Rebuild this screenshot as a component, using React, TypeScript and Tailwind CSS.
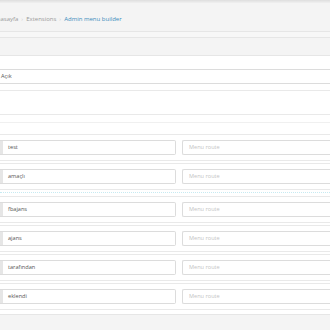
import React from 'react';

const items = ['test', 'amaçlı', 'fbajans', 'ajans', 'tarafından', 'eklendi'];

function MenuRow({ label }: { label: string }) {
  return (
    <div className="border-y border-[#e9e9e9] py-[5px] mb-[2px]">
      <div className="flex items-center gap-[6px]">
        <div className="flex h-[15px] w-[176px] items-center rounded-r-[2px] border border-l-0 border-[#dcdcdc] bg-white">
          <div className="h-full w-[3px] bg-[#e6e6e6]" />
          <span className="pl-[5px] text-[5.6px] text-[#555]">{label}</span>
        </div>
        <div className="flex h-[15px] flex-1 items-center rounded-l-[2px] border border-r-0 border-[#dcdcdc] bg-white pl-[6px]">
          <span className="text-[5.6px] text-[#c4c4c4]">Menu route</span>
        </div>
      </div>
    </div>
  );
}

export default function App() {
  return (
    <div
      className="h-[330px] w-[330px] overflow-hidden bg-white"
      style={{ fontFamily: '"Open Sans", "Noto Sans", sans-serif' }}
    >
      {/* top shadow */}
      <div className="h-[3px] bg-gradient-to-b from-[#dedede] to-[#f0f0f0]" />

      {/* breadcrumb */}
      <div className="flex h-[28px] items-center bg-[#f4f4f4] pt-[5px] text-[6px] text-[#9a9a9a]">
        <span className="ml-[-7px]">Anasayfa</span>
        <span className="mx-[3px] text-[#cfcfcf]">›</span>
        <span>Extensions</span>
        <span className="mx-[3px] text-[#cfcfcf]">›</span>
        <span className="text-[#3c8dbc]">Admin menu builder</span>
      </div>
      <div className="h-[7px] border-y border-[#e6e6e6] bg-[#f7f7f7]" />
      <div className="h-[18px] border-b border-[#e6e6e6] bg-[#f4f4f4]" />

      {/* status */}
      <div className="pt-[13px]">
        <div className="flex h-[15px] items-center border-y border-[#dcdcdc] bg-white">
          <span className="pl-[1px] text-[5.6px] text-[#555]">Açık</span>
        </div>
        <div className="mt-[6px] border-b border-[#e9e9e9]" />
      </div>

      <div className="mt-[23px] border-b border-[#e9e9e9]" />
      <div className="mt-[7px] border-b border-[#f0f0f0]" />

      {/* menu list */}
      <div className="mt-[11px]">
        <MenuRow label={items[0]} />
        <MenuRow label={items[1]} />
        <div className="mb-[3px] border-b border-dotted border-[#c6eaf2]" />
        {items.slice(2).map((label) => (
          <MenuRow key={label} label={label} />
        ))}
      </div>

      <div className="mt-[4px] h-[20px] border-t border-[#e6e6e6] bg-[#f4f4f4]" />
    </div>
  );
}
